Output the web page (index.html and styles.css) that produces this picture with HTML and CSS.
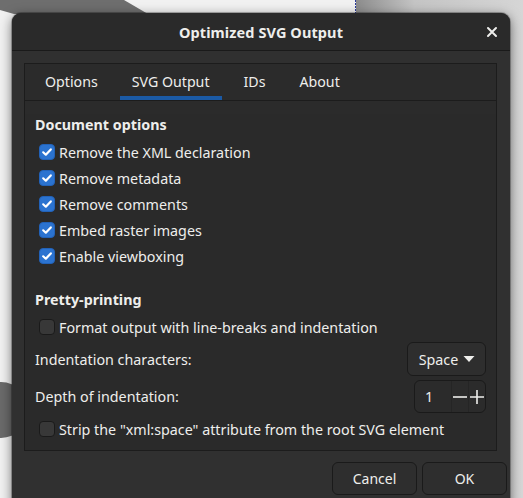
FILE: index.html
```html
<!DOCTYPE html>
<html>
<head>
<meta charset="utf-8">
<link rel="stylesheet" href="styles.css">
</head>
<body>
<div class="desktop">
  <svg class="bg-art" width="523" height="498" viewBox="0 0 523 498">
    <defs>
      <linearGradient id="rg" x1="0" x2="1" y1="0" y2="0">
        <stop offset="0" stop-color="#8c8c8c"/>
        <stop offset="0.35" stop-color="#c4c4c4"/>
        <stop offset="1" stop-color="#d6d6d6"/>
      </linearGradient>
    </defs>
    <rect x="0" y="0" width="523" height="498" fill="#f1f1f1"/>
    <polygon points="0,0 124,0 148,14 14,14 0,10" fill="#6e6e6e"/>
    <rect x="356" y="0" width="167" height="498" fill="url(#rg)"/>
    <line x1="355.5" y1="0" x2="355.5" y2="14" stroke="#2b3a9a" stroke-width="1" stroke-dasharray="2,1"/>
    <circle cx="1" cy="410" r="28" fill="#6a6a6a"/>
  </svg>

  <div class="dialog">
    <div class="titlebar">
      <span class="title">Optimized SVG Output</span>
      <span class="close">
        <svg width="12" height="12" viewBox="0 0 12 12"><path d="M2 2 L10 10 M10 2 L2 10" stroke="#eeeeec" stroke-width="2" stroke-linecap="round"/></svg>
      </span>
    </div>
    <div class="dialog-body">
      <div class="notebook">
        <div class="tabs">
          <div class="tab">Options</div>
          <div class="tab active">SVG Output</div>
          <div class="tab">IDs</div>
          <div class="tab">About</div>
        </div>
        <div class="page">
          <div class="heading first">Document options</div>
          <label class="check-row"><span class="box checked"><svg width="12" height="12" viewBox="0 0 12 12"><path d="M2.2 6.3 L4.8 8.7 L9.8 3.4" fill="none" stroke="#fff" stroke-width="2.2" stroke-linecap="round" stroke-linejoin="round"/></svg></span><span>Remove the XML declaration</span></label>
          <label class="check-row"><span class="box checked"><svg width="12" height="12" viewBox="0 0 12 12"><path d="M2.2 6.3 L4.8 8.7 L9.8 3.4" fill="none" stroke="#fff" stroke-width="2.2" stroke-linecap="round" stroke-linejoin="round"/></svg></span><span>Remove metadata</span></label>
          <label class="check-row"><span class="box checked"><svg width="12" height="12" viewBox="0 0 12 12"><path d="M2.2 6.3 L4.8 8.7 L9.8 3.4" fill="none" stroke="#fff" stroke-width="2.2" stroke-linecap="round" stroke-linejoin="round"/></svg></span><span>Remove comments</span></label>
          <label class="check-row"><span class="box checked"><svg width="12" height="12" viewBox="0 0 12 12"><path d="M2.2 6.3 L4.8 8.7 L9.8 3.4" fill="none" stroke="#fff" stroke-width="2.2" stroke-linecap="round" stroke-linejoin="round"/></svg></span><span>Embed raster images</span></label>
          <label class="check-row"><span class="box checked"><svg width="12" height="12" viewBox="0 0 12 12"><path d="M2.2 6.3 L4.8 8.7 L9.8 3.4" fill="none" stroke="#fff" stroke-width="2.2" stroke-linecap="round" stroke-linejoin="round"/></svg></span><span>Enable viewboxing</span></label>

          <div class="heading second">Pretty-printing</div>
          <label class="check-row"><span class="box"></span><span>Format output with line-breaks and indentation</span></label>
          <div class="field-row dropdown-row">
            <span class="field-label">Indentation characters:</span>
            <div class="dropdown">Space <svg width="12" height="8" viewBox="0 0 12 8"><path d="M0.5 1 L11.5 1 L6 7 Z" fill="#eeeeec"/></svg></div>
          </div>
          <div class="field-row spin-row">
            <span class="field-label">Depth of indentation:</span>
            <div class="spin">
              <span class="spin-value">1</span>
              <span class="spin-btn"><svg width="14" height="14" viewBox="0 0 14 14"><path d="M0 7 H14" stroke="#eeeeec" stroke-width="1.6"/></svg></span>
              <span class="spin-btn"><svg width="14" height="14" viewBox="0 0 14 14"><path d="M0 7 H14 M7 0 V14" stroke="#eeeeec" stroke-width="1.6"/></svg></span>
            </div>
          </div>
          <label class="check-row last"><span class="box"></span><span>Strip the "xml:space" attribute from the root SVG element</span></label>
        </div>
      </div>
      <div class="actions">
        <button class="btn">Cancel</button>
        <button class="btn">OK</button>
      </div>
    </div>
  </div>
</div>
</body>
</html>
```

FILE: styles.css
```css
html, body {
  margin: 0;
  padding: 0;
}
body {
  width: 523px;
  height: 498px;
  overflow: hidden;
  font-family: "Noto Sans", "Open Sans", sans-serif;
  color: #eeeeec;
}
.desktop {
  position: relative;
  width: 523px;
  height: 498px;
  overflow: hidden;
}
.bg-art {
  position: absolute;
  left: 0;
  top: 0;
}
.dialog {
  position: absolute;
  left: 12px;
  top: 13px;
  width: 498px;
  height: 500px;
  background: #303030;
  border-radius: 9px 9px 0 0;
  box-shadow: 0 3px 12px rgba(0, 0, 0, 0.55), 0 0 0 1px rgba(0, 0, 0, 0.25);
  display: flex;
  flex-direction: column;
}
.titlebar {
  height: 37px;
  background: #2a2a2a;
  border-bottom: 1px solid #1a1a1a;
  border-radius: 9px 9px 0 0;
  display: flex;
  align-items: center;
  justify-content: center;
  position: relative;
}
.title {
  font-weight: bold;
  font-size: 14.5px;
  letter-spacing: 0.1px;
}
.close {
  position: absolute;
  right: 12px;
  top: 13px;
  width: 12px;
  height: 12px;
  display: flex;
}
.dialog-body {
  padding: 12px 3px 0 12px;
  display: flex;
  flex-direction: column;
}
.notebook {
  width: 471px;
  border: 1px solid #1c1c1c;
  background: #2b2b2b;
}
.tabs {
  height: 36px;
  display: flex;
  padding-left: 8px;
  gap: 10px;
  border-bottom: 1px solid #1c1c1c;
  background: #2b2b2b;
}
.tab {
  font-size: 14.2px;
  padding: 0 12px 1px 12px;
  display: flex;
  align-items: center;
  box-sizing: border-box;
  height: 36px;
}
.tab.active {
  box-shadow: inset 0 -4px 0 #1b5aa5;
}
.page {
  background: #2a2a2a;
  padding: 0 10px 8px 10px;
  font-size: 14.3px;
}
.heading {
  font-weight: bold;
  height: 22px;
  line-height: 22px;
}
.heading.first {
  margin-top: 13px;
  margin-bottom: 3px;
}
.heading.second {
  margin-top: 20px;
  margin-bottom: 3px;
}
.check-row {
  display: flex;
  align-items: center;
  height: 26px;
  gap: 4px;
  padding-left: 4px;
}
.box {
  width: 16px;
  height: 16px;
  box-sizing: border-box;
  border-radius: 4px;
  background: #383838;
  border: 1px solid #1a1a1a;
  display: flex;
  align-items: center;
  justify-content: center;
  flex-shrink: 0;
}
.box.checked {
  background: #2b73d0;
  border-color: #2262b8;
}
.field-row {
  display: flex;
  align-items: center;
  justify-content: space-between;
}
.dropdown-row {
  margin-top: 2px;
  height: 34px;
}
.spin-row {
  margin-top: 4px;
  height: 33px;
}
.dropdown {
  width: 79px;
  height: 34px;
  box-sizing: border-box;
  border: 1px solid #1a1a1a;
  border-radius: 6px;
  background: #2e2e2e;
  display: flex;
  align-items: center;
  justify-content: center;
  gap: 5px;
  padding-left: 1px;
}
.spin {
  width: 72px;
  height: 33px;
  box-sizing: border-box;
  border: 1px solid #1a1a1a;
  border-radius: 6px;
  background: #2b2b2b;
  display: flex;
  align-items: center;
}
.spin-value {
  width: 37px;
  padding-left: 10px;
  box-sizing: border-box;
}
.spin-btn {
  width: 17px;
  height: 31px;
  display: flex;
  align-items: center;
  justify-content: center;
  border-left: 1px solid #252525;
}
.check-row.last {
  margin-top: 3px;
}
.actions {
  display: flex;
  justify-content: flex-end;
  gap: 5px;
  margin-top: 11px;
}
.btn {
  width: 85px;
  height: 33px;
  border: 1px solid #1a1a1a;
  border-radius: 6px;
  background: #2e2e2e;
  color: #eeeeec;
  font-family: "Noto Sans", "Open Sans", sans-serif;
  font-size: 14px;
  padding: 0;
}
```
